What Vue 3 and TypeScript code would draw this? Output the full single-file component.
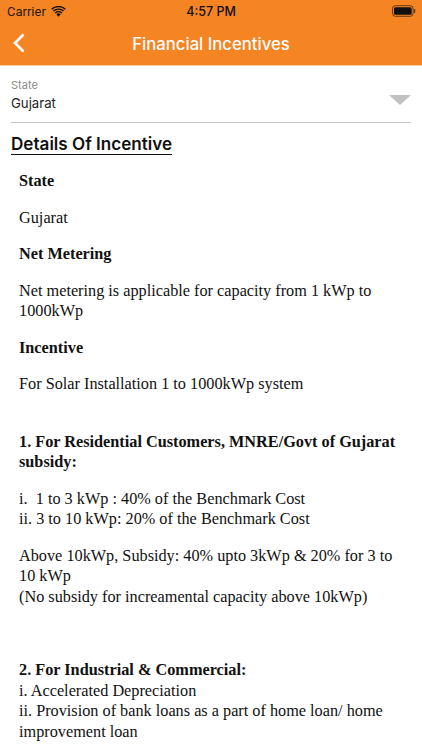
<script setup lang="ts">
const title = 'Financial Incentives'
</script>

<template>
  <div class="page">
    <header class="head">
      <div class="status">
        <div class="status-left">
          <span>Carrier</span>
          <svg class="wifi" width="15" height="11" viewBox="0 0 16 12">
            <path d="M8 11.6 5.7 9a3.4 3.4 0 0 1 4.6 0Z" fill="#111" />
            <path d="M3.9 7.1a6 6 0 0 1 8.2 0l-1 1.1a4.5 4.5 0 0 0-6.2 0Z" fill="#111" />
            <path d="M1.9 5a9 9 0 0 1 12.2 0l-1.1 1.1a7.4 7.4 0 0 0-10 0Z" fill="#111" />
            <path d="M0 3a11.7 11.7 0 0 1 16 0l-1.1 1.1a10.2 10.2 0 0 0-13.8 0Z" fill="#111" />
          </svg>
        </div>
        <span class="clock">4:57 PM</span>
        <svg class="battery" width="24" height="12" viewBox="0 0 25 12">
          <rect x="0.5" y="0.5" width="21.5" height="11" rx="3" fill="none" stroke="#5a3410" />
          <rect x="2" y="2" width="18.5" height="8" rx="1.6" fill="#111" />
          <rect x="23" y="4" width="1.3" height="4" rx="0.6" fill="#5a3410" />
        </svg>
      </div>
      <div class="nav">
        <svg class="back" width="14" height="22" viewBox="0 0 14 22">
          <path d="M11.5 2.5 3 11l8.5 8.5" fill="none" stroke="#fff" stroke-width="2.6" />
        </svg>
        <span class="title">{{ title }}</span>
      </div>
    </header>

    <section class="select">
      <div class="select-text">
        <span class="select-label">State</span>
        <span class="select-value">Gujarat</span>
      </div>
      <span class="caret"></span>
    </section>

    <h2 class="section-title">Details Of Incentive</h2>

    <article class="body">
      <p><b>State</b></p>
      <p>Gujarat</p>
      <p><b>Net Metering</b></p>
      <p>Net metering is applicable for capacity from 1 kWp to 1000kWp</p>
      <p><b>Incentive</b></p>
      <p>For Solar Installation 1 to 1000kWp system</p>
      <p class="gap"><b>1. For Residential Customers, MNRE/Govt of Gujarat subsidy:</b></p>
      <p>i.&nbsp; 1 to 3 kWp : 40% of the Benchmark Cost<br />ii. 3 to 10 kWp: 20% of the Benchmark Cost</p>
      <p>Above 10kWp, Subsidy: 40% upto 3kWp &amp; 20% for 3 to 10 kWp<br />(No subsidy for increamental capacity above 10kWp)</p>
      <p class="gap-lg"><b>2. For Industrial &amp; Commercial:</b><br />i. Accelerated Depreciation<br />ii. Provision of bank loans as a part of home loan/ home improvement loan</p>
    </article>
  </div>
</template>

<style>
html, body { margin: 0; background: #fff; overflow: hidden; }
</style>

<style scoped>
.page {
  width: 422px;
  height: 750px;
  overflow: hidden;
  background: #fff;
  font-family: "Liberation Sans", Arial, sans-serif;
}
.head {
  background: #f58423;
  height: 65px;
  border-bottom: 1px solid #f9c9a0;
}
.status {
  height: 22px;
  display: flex;
  align-items: center;
  justify-content: space-between;
  padding: 0 6px 0 7px;
  position: relative;
  font-family: Roboto, "Liberation Sans", sans-serif;
  font-size: 13px;
  color: #2a1a08;
}
.status-left { display: flex; align-items: center; gap: 5px; }
.clock {
  position: absolute;
  left: 0;
  right: 0;
  text-align: center;
  font-family: Inter, sans-serif;
  font-weight: 500;
  font-size: 12.5px;
  color: #111;
}
.nav {
  height: 43px;
  display: flex;
  align-items: center;
  justify-content: center;
  position: relative;
}
.back { position: absolute; left: 12px; top: 10px; }
.title {
  color: #fff;
  font-family: Inter, sans-serif;
  font-weight: 500;
  font-size: 16.7px;
}
.select {
  margin: 12px 11px 0;
  height: 44px;
  border-bottom: 1px solid #c4c4c4;
  display: flex;
  justify-content: space-between;
  align-items: flex-start;
}
.select-text { display: flex; flex-direction: column; font-family: Inter, sans-serif; }
.select-label { font-size: 11px; line-height: 14px; color: #8a8a8a; }
.select-value { font-size: 13.2px; line-height: 20px; color: #222; margin-top: 1px; }
.caret {
  margin-top: 17px;
  width: 0;
  height: 0;
  border-left: 11px solid transparent;
  border-right: 11px solid transparent;
  border-top: 10px solid #c2c2c2;
}
.section-title {
  display: inline-block;
  margin: 10px 0 0 11px;
  font-family: Inter, sans-serif;
  font-size: 17.1px;
  line-height: 21px;
  font-weight: 600;
  color: #111;
  border-bottom: 1px solid #111;
}
.body {
  padding: 0 19px;
  margin-top: 6px;
  font-family: "Liberation Serif", "Times New Roman", serif;
  font-size: 16.25px;
  line-height: 20.5px;
  color: #111;
}
.body p { margin: 16px 0; }
.body p.gap { margin-top: 37px; }
.body p.gap-lg { margin-top: 53px; }
</style>
